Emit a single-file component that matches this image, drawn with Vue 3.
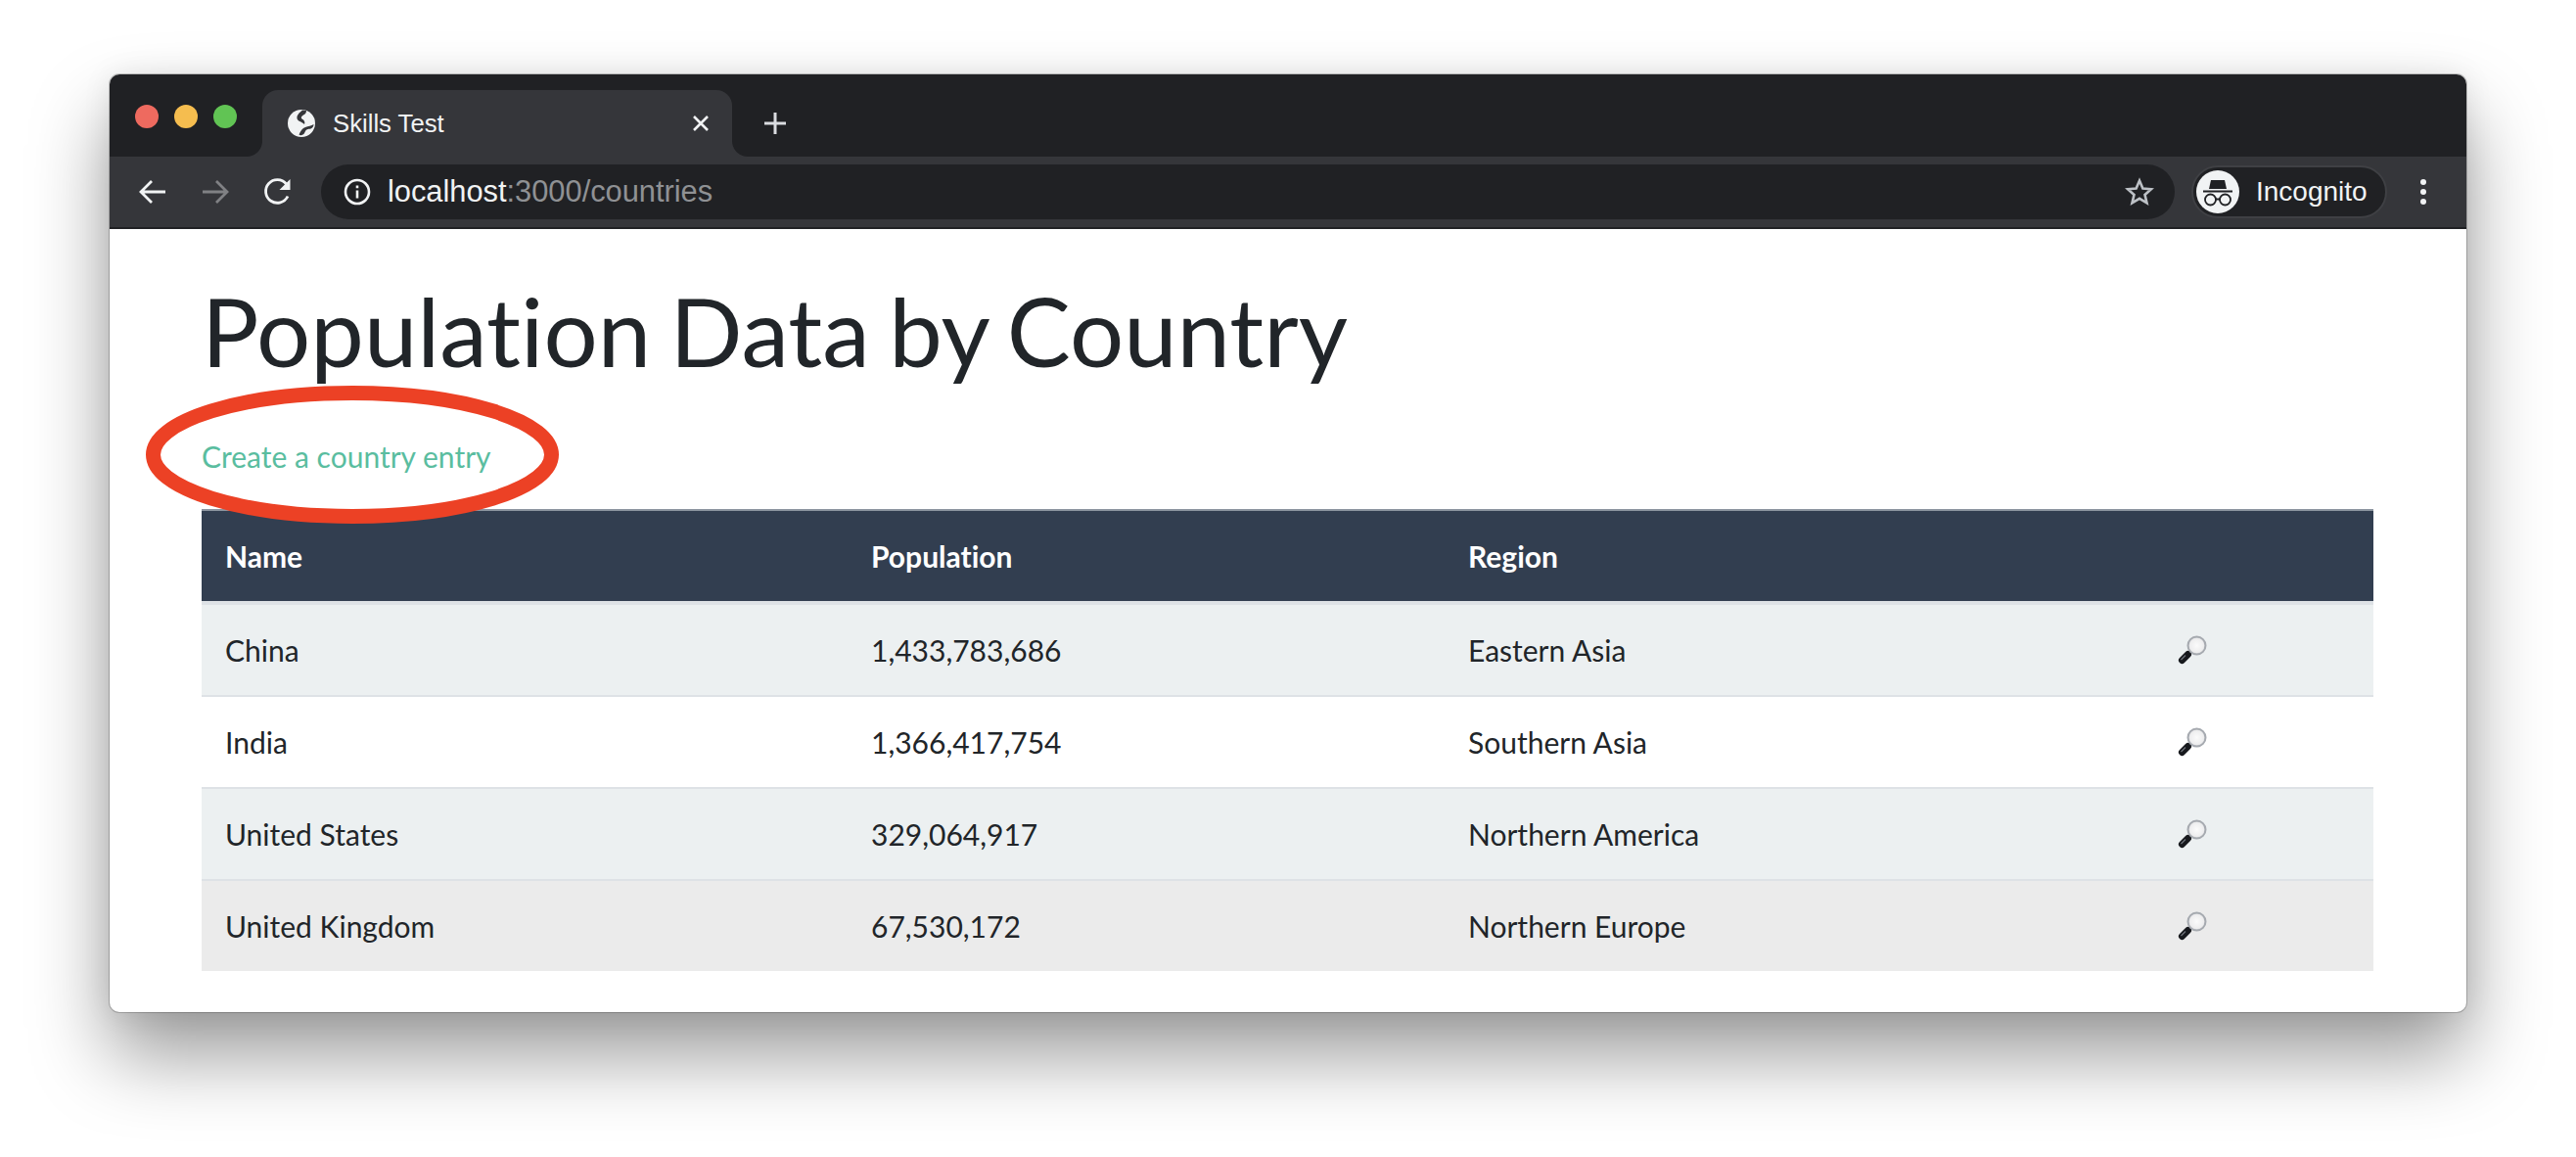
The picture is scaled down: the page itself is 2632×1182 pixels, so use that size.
<script setup>
const countries = [
  { name: 'China', population: '1,433,783,686', region: 'Eastern Asia' },
  { name: 'India', population: '1,366,417,754', region: 'Southern Asia' },
  { name: 'United States', population: '329,064,917', region: 'Northern America' },
  { name: 'United Kingdom', population: '67,530,172', region: 'Northern Europe' }
]
</script>

<template>
  <div class="page">
    <div class="window">
      <div class="titlebar">
        <div class="lights">
          <span class="light red"></span>
          <span class="light yellow"></span>
          <span class="light green"></span>
        </div>
        <div class="tab">
          <svg class="globe" viewBox="0 0 28 28">
            <circle cx="14" cy="14" r="14" fill="#f1f3f4" />
            <path d="M15 .5C12 3 9 5.500 9.500 9c.5 3 4.500 3 7.500 6 1-2 0-4.500-2.500-5.500-1.500-1-.5-3 1.500-4 2-1 3-2.500 3-4.500z" fill="#35363a" />
            <path d="M11.500 25.500C13 22 15 19 18 18c3-1 6-1.500 8.500-3 0 3-2.500 5-5 4.800-2.500-.1-3.500 2.200-4.500 4.200-1 2-4 3-5.500 1.500z" fill="#35363a" />
          </svg>
          <span class="tab-title">Skills Test</span>
          <svg class="close" viewBox="0 0 18 18">
            <path d="M2 2l14 14M16 2L2 16" stroke="#f1f3f4" stroke-width="2.600" fill="none" />
          </svg>
        </div>
        <svg class="plus" viewBox="0 0 24 24">
          <path d="M12 1v22M1 12h22" stroke="#dadce0" stroke-width="3" fill="none" />
        </svg>
      </div>

      <div class="toolbar">
        <svg class="nav" viewBox="0 0 32 32">
          <path d="M29 16H5M15 5L4 16l11 11" stroke="#f1f3f4" stroke-width="2.800" fill="none" />
        </svg>
        <svg class="nav" viewBox="0 0 32 32">
          <path d="M3 16h24M17 5l11 11-11 11" stroke="#808184" stroke-width="2.800" fill="none" />
        </svg>
        <svg class="nav" viewBox="0 0 32 32">
          <path d="M26 20.500A11.800 11.800 0 1 1 24.500 8" stroke="#f1f3f4" stroke-width="2.800" fill="none" />
          <path d="M28.500 3v11h-11z" fill="#f1f3f4" />
        </svg>
        <div class="omnibox">
          <svg class="info" viewBox="0 0 28 28">
            <circle cx="14" cy="14" r="12" stroke="#f1f3f4" stroke-width="2.600" fill="none" />
            <path d="M12.700 12.500h2.600v8h-2.600zM12.700 7.500h2.600v2.700h-2.600z" fill="#f1f3f4" />
          </svg>
          <span class="url">localhost<span class="url-rest">:3000/countries</span></span>
          <svg class="star" viewBox="0 0 30 30">
            <path d="M15 3.500l3.400 8 8.600.7-6.500 5.700 2 8.400-7.500-4.500-7.500 4.500 2-8.400L3 12.200l8.600-.7z" stroke="#bdc1c6" stroke-width="2.600" fill="none" />
          </svg>
        </div>
        <div class="profile">
          <svg class="avatar" viewBox="0 0 44 44">
            <circle cx="22" cy="22" r="22" fill="#f1f3f4" />
            <path d="M15 10h14l2 9H13z" fill="#202124" />
            <path d="M7 20.500h30v2H7z" fill="#202124" />
            <circle cx="14.500" cy="30" r="5.500" stroke="#202124" stroke-width="1.800" fill="none" />
            <circle cx="29.500" cy="30" r="5.500" stroke="#202124" stroke-width="1.800" fill="none" />
            <path d="M19.500 29.500h5" stroke="#202124" stroke-width="1.800" />
          </svg>
          <span class="profile-name">Incognito</span>
        </div>
        <div class="menu">
          <span class="dot"></span>
          <span class="dot"></span>
          <span class="dot"></span>
        </div>
      </div>

      <div class="content">
        <h1>Population Data by Country</h1>
        <div class="link-row">
          <a class="create-link" href="#">Create a country entry</a>
          <svg class="circled" viewBox="0 0 422 141">
            <ellipse cx="211" cy="70.500" rx="203.500" ry="63" stroke="#ec4125" stroke-width="15" fill="none" />
          </svg>
        </div>
        <table>
          <colgroup>
            <col class="col-name" />
            <col class="col-pop" />
            <col class="col-region" />
            <col />
          </colgroup>
          <thead>
            <tr>
              <th>Name</th>
              <th>Population</th>
              <th>Region</th>
              <th></th>
            </tr>
          </thead>
          <tbody>
            <tr v-for="c in countries" :key="c.name">
              <td>{{ c.name }}</td>
              <td>{{ c.population }}</td>
              <td>{{ c.region }}</td>
              <td>
                <svg class="lens" viewBox="0 0 30 30">
                  <defs>
                    <radialGradient id="glass" cx="50%" cy="50%" r="55%">
                      <stop offset="0" stop-color="#fbfbfb" />
                      <stop offset="0.7" stop-color="#eeeeef" />
                      <stop offset="1" stop-color="#bfc1c5" />
                    </radialGradient>
                  </defs>
                  <path d="M14 16l-3 3" stroke="#7c8087" stroke-width="3.500" />
                  <path d="M10.500 19.500L4.500 25.500" stroke="#17191d" stroke-width="7" stroke-linecap="round" />
                  <path d="M3.500 25l4.500-4.500" stroke="#6f747b" stroke-width="1.300" />
                  <circle cx="19.500" cy="10.500" r="9" fill="url(#glass)" stroke="#a6aab0" stroke-width="2" />
                </svg>
              </td>
            </tr>
          </tbody>
        </table>
      </div>
    </div>
  </div>
</template>

<style>
body {
  background: #fff;
}
</style>

<style scoped>
.page {
  width: 2632px;
  height: 1182px;
  padding: 76px 0 0 112px;
  box-sizing: border-box;
  overflow: hidden;
  background: #fff;
}

.window {
  width: 2408px;
  height: 958px;
  border-radius: 10px;
  overflow: hidden;
  background: #fff;
  box-shadow: 0 0 0 1px rgba(0, 0, 0, 0.2), 0 0 30px rgba(0, 0, 0, 0.08), 0 44px 80px rgba(0, 0, 0, 0.4);
}

.titlebar {
  display: flex;
  align-items: flex-end;
  height: 84px;
  background: #202124;
  box-sizing: border-box;
}

.lights {
  display: flex;
  gap: 16px;
  padding: 0 26px;
  align-self: flex-start;
  margin-top: 31px;
}

.light {
  width: 24px;
  height: 24px;
  border-radius: 50%;
}
.red { background: #ee6a5f; }
.yellow { background: #f5bd4f; }
.green { background: #61c454; }

.tab {
  position: relative;
  display: flex;
  align-items: center;
  width: 480px;
  height: 68px;
  box-sizing: border-box;
  padding: 0 23px 0 26px;
  background: #35363a;
  border-radius: 16px 16px 0 0;
}

.tab::before,
.tab::after {
  content: '';
  position: absolute;
  bottom: 0;
  width: 16px;
  height: 16px;
}
.tab::before {
  left: -16px;
  background: radial-gradient(circle at 0 0, #202124 15.500px, #35363a 16.500px);
}
.tab::after {
  right: -16px;
  background: radial-gradient(circle at 100% 0, #202124 15.500px, #35363a 16.500px);
}

.globe {
  width: 28px;
  height: 28px;
  flex: none;
}

.tab-title {
  flex: 1;
  margin-left: 18px;
  font: 25.700px "Liberation Sans", sans-serif;
  color: #f1f3f4;
}

.close {
  width: 18px;
  height: 18px;
}

.plus {
  width: 24px;
  height: 24px;
  margin: 0 0 22px 32px;
}

.toolbar {
  display: flex;
  align-items: center;
  height: 74px;
  box-sizing: border-box;
  padding: 0 0 0 28px;
  background: #35363a;
  border-bottom: 2px solid #202124;
}

.nav {
  width: 32px;
  height: 32px;
  margin-right: 32px;
  flex: none;
}
.nav:nth-child(3) {
  margin-right: 28px;
}

.omnibox {
  display: flex;
  align-items: center;
  width: 1894px;
  height: 56px;
  box-sizing: border-box;
  padding: 0 21px 0 23px;
  background: #202124;
  border-radius: 28px;
}

.info {
  width: 28px;
  height: 28px;
  flex: none;
}

.url {
  flex: 1;
  margin-left: 17px;
  font: 30.800px "Liberation Sans", sans-serif;
  color: #f1f3f4;
}

.url-rest {
  color: #8f9194;
}

.star {
  width: 30px;
  height: 30px;
}

.profile {
  display: flex;
  align-items: center;
  gap: 17px;
  width: 200px;
  height: 54px;
  box-sizing: border-box;
  margin-left: 17px;
  padding-left: 3px;
  background: #202124;
  border: 2px solid #3f4044;
  border-radius: 27px;
}

.avatar {
  width: 44px;
  height: 44px;
  flex: none;
}

.profile-name {
  font: 28px "Liberation Sans", sans-serif;
  color: #f1f3f4;
}

.menu {
  display: flex;
  flex-direction: column;
  gap: 4px;
  margin-left: 34px;
}

.dot {
  width: 6px;
  height: 6px;
  border-radius: 50%;
  background: #f1f3f4;
}

.content {
  padding: 0 95px 0 94px;
  font: 30px Lato, sans-serif;
  font-variant-ligatures: none;
  color: #212529;
}

h1 {
  margin: 0;
  padding-top: 46px;
  font-size: 97.500px;
  font-weight: 400;
  word-spacing: -5.500px;
  line-height: 115px;
}

.link-row {
  position: relative;
  height: 125px;
  box-sizing: border-box;
  padding-top: 53px;
}

.create-link {
  color: #5abd9f;
  text-decoration: none;
}

.circled {
  position: absolute;
  left: -57px;
  top: -1px;
  width: 422px;
  height: 141px;
  z-index: 1;
}

table {
  width: 100%;
  table-layout: fixed;
  border-collapse: separate;
  border-spacing: 0;
}

.col-name { width: 660px; }
.col-pop { width: 610px; }
.col-region { width: 725px; }

th {
  height: 98px;
  padding: 0 24px;
  box-sizing: border-box;
  background: #323e50;
  color: #fff;
  font-weight: 700;
  text-align: left;
  border-top: 2px solid #8d95a0;
  border-bottom: 4px solid #dee2e6;
}

td {
  height: 94px;
  padding: 0 24px;
  box-sizing: border-box;
  border-top: 2px solid #dee2e6;
}

tbody tr:first-child td {
  border-top: 0;
  height: 92px;
}

tbody tr:nth-child(odd) {
  background: #ecf0f1;
}

tbody tr:last-child {
  background: #ebebeb;
}

.lens {
  display: block;
  width: 30px;
  height: 30px;
}
</style>
